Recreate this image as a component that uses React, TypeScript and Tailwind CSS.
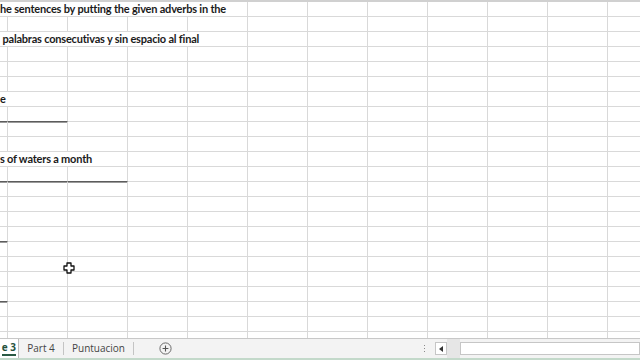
import { Fragment } from "react";

type TextCell = { span: number; text: string; shift: string };

const ROWS = 23;
const COLS = 12;

const textRows: Record<number, TextCell> = {
  0: { span: 5, text: "he sentences by putting the given adverbs in the", shift: "ml-0" },
  2: { span: 5, text: " palabras consecutivas y sin espacio al final", shift: "ml-0" },
  6: { span: 2, text: "e", shift: "ml-0" },
  10: { span: 3, text: "s of waters a month", shift: "ml-0" },
};

// cells with a dark bottom border (row -> columns)
const darkBottom: Record<number, number[]> = {
  7: [0, 1],
  11: [0, 1, 2],
  15: [0],
  19: [0],
};

const spanWidth: Record<number, string> = {
  1: "w-[8px]",
  2: "w-[68px]",
  3: "w-[128px]",
  5: "w-[248px]",
};

function Row({ index }: { index: number }) {
  const t = textRows[index];
  const dark = darkBottom[index] ?? [];
  const cells = [];
  let col = 0;
  while (col < COLS) {
    const isText = t && col === 0;
    const span = isText ? t.span : 1;
    const width = col === 0 ? spanWidth[span] : "w-[60px]";
    const darkB = dark.includes(col);
    cells.push(
      <div
        key={col}
        className={`relative h-[15px] shrink-0 border-r border-b ${width} ${
          darkB
            ? "border-b-[#5c5c5c] border-r-[#d9d9d9] shadow-[0_1px_0_#9a9a9a]"
            : "border-[#d9d9d9]"
        }`}
      >
        {isText ? (
          <span
            className={`block whitespace-pre text-[11px] font-bold leading-[14px] tracking-[-0.2px] text-[#1b1b1b] ${t.shift}`}
          >
            {t.text}
          </span>
        ) : null}
      </div>
    );
    col += span;
  }
  return <div className="flex h-[15px]">{cells}</div>;
}

function PlusCursor() {
  return (
    <svg width="12" height="12" viewBox="0 0 12 12" className="absolute left-[63px] top-[262px]">
      <path
        d="M4 1h4v3h3v4H8v3H4V8H1V4h3z"
        fill="#ffffff"
        stroke="#111111"
        strokeWidth="1.3"
        strokeLinejoin="round"
      />
    </svg>
  );
}

export default function App() {
  return (
    <div
      className="relative flex h-[360px] w-[640px] flex-col overflow-hidden bg-white"
      style={{ fontFamily: "Lato, 'Open Sans', sans-serif" }}
    >
      <div className="h-[338px] shrink-0 overflow-hidden border-t-2 border-[#d0d0d0]">
        {Array.from({ length: ROWS }).map((_, i) => (
          <Fragment key={i}>
            <Row index={i} />
          </Fragment>
        ))}
      </div>

      <div
        className="flex h-[20px] shrink-0 items-stretch border-t border-[#c8c8c8] bg-[#f3f3f3] text-[10px] text-[#444]"
        style={{ fontFamily: "'Open Sans', 'Noto Sans', sans-serif" }}
      >
        <div className="flex w-[19px] items-center justify-end overflow-hidden border-r border-[#bdbdbd] bg-white pr-[2px]">
          <span className="whitespace-nowrap border-b-2 border-[#2a5a44] font-bold leading-[13px] text-[#24513c]">
            e 3
          </span>
        </div>
        <div className="flex w-[44px] items-center justify-center">Part 4</div>
        <div className="my-[3px] w-px bg-[#c4c4c4]" />
        <div className="flex w-[69px] items-center justify-center">Puntuacion</div>
        <div className="my-[3px] w-px bg-[#c4c4c4]" />
        <div className="flex w-[38px] items-center justify-end">
          <svg width="13" height="13" viewBox="0 0 13 13">
            <circle cx="6.5" cy="6.5" r="5.6" fill="none" stroke="#6b6b6b" strokeWidth="1" />
            <path d="M6.5 3.6v5.8M3.6 6.5h5.8" stroke="#555" strokeWidth="1.1" />
          </svg>
        </div>
        <div className="flex-1" />
        <div className="flex w-[4px] flex-col items-center justify-center gap-[2px]">
          <div className="h-[1px] w-[1px] bg-[#8a8a8a]" />
          <div className="h-[1px] w-[1px] bg-[#8a8a8a]" />
          <div className="h-[1px] w-[1px] bg-[#8a8a8a]" />
        </div>
        <div className="w-[9px]" />
        <div className="my-[3px] flex w-[12px] items-center justify-center border border-[#c6c6c6] bg-white">
          <div className="h-0 w-0 border-y-[3px] border-r-[4px] border-y-transparent border-r-[#333]" />
        </div>
        <div className="w-[13px] bg-[#e6e6e6]" />
        <div className="my-[3px] w-[180px] border border-[#c6c6c6] bg-white" />
      </div>
      <div className="h-[2px] shrink-0 bg-[#c3d9ca]" />

      <PlusCursor />
    </div>
  );
}
